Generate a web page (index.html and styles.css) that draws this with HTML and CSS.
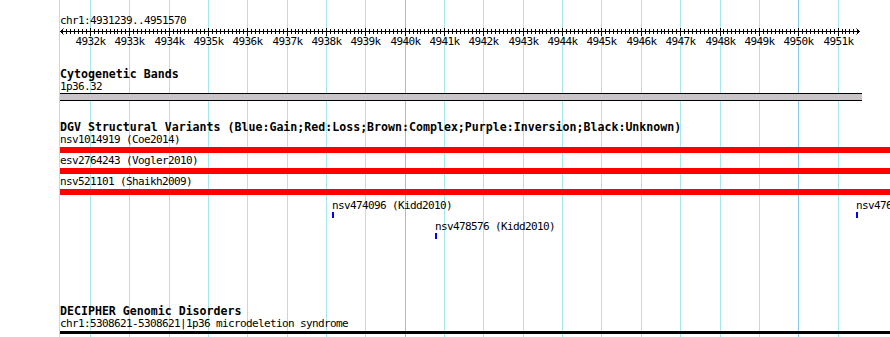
FILE: index.html
```html
<!DOCTYPE html>
<html lang="en">
<head>
  <meta charset="UTF-8" />
  <title>chr1:4931239..4951570</title>
  <link rel="stylesheet" href="styles.css">
</head>
<body>
  <div class="panel">
    <svg class="grid" id="grid" width="890" height="337"></svg>

    <div class="tracks">
      <div class="pos">chr1:4931239..4951570</div>
      <svg class="ruler" id="ruler" width="830" height="41"></svg>

      <div class="track-title">Cytogenetic Bands</div>
      <div class="label">1p36.32</div>
      <div class="band"></div>

      <div class="track-title dgv-title">DGV Structural Variants (Blue:Gain;Red:Loss;Brown:Complex;Purple:Inversion;Black:Unknown)</div>
      <div class="variant">
        <div class="label">nsv1014919 (Coe2014)</div>
        <div class="bar loss"></div>
      </div>
      <div class="variant">
        <div class="label">esv2764243 (Vogler2010)</div>
        <div class="bar loss"></div>
      </div>
      <div class="variant">
        <div class="label">nsv521101 (Shaikh2009)</div>
        <div class="bar loss"></div>
      </div>

      <div class="small-features">
        <div class="feature" style="left: 272px; top: 0px;">
          <div class="label">nsv474096 (Kidd2010)</div>
          <div class="mark gain"></div>
        </div>
        <div class="feature" style="left: 375px; top: 21px;">
          <div class="label">nsv478576 (Kidd2010)</div>
          <div class="mark gain"></div>
        </div>
        <div class="feature" style="left: 796px; top: 0px;">
          <div class="label">nsv476121 (Kidd2010)</div>
          <div class="mark gain"></div>
        </div>
      </div>

      <div class="track-title">DECIPHER Genomic Disorders</div>
      <div class="label">chr1:5308621-5308621|1p36 microdeletion syndrome</div>
      <div class="bar decipher"></div>
    </div>
  </div>

  <script src="script.js"></script>
</body>
</html>
```

FILE: styles.css
```css
html, body {
  margin: 0;
  padding: 0;
  background-color: #fff;
  overflow: hidden;
}
body {
  font-family: "DejaVu Sans Mono", "Liberation Mono", monospace;
  font-size: 11px;
  letter-spacing: -0.62px;
  color: #000;
}
.panel {
  position: relative;
  width: 890px;
  height: 337px;
  overflow: hidden;
}
.grid {
  position: absolute;
  top: 0;
  left: 0;
}
.tracks {
  position: relative;
  padding-left: 60px;
}
.pos {
  padding-top: 15px;
  height: 12px;
  line-height: 12px;
}
.ruler {
  display: block;
}
.ruler text {
  font-family: "DejaVu Sans Mono", "Liberation Mono", monospace;
  font-size: 11px;
  letter-spacing: -0.62px;
}
.label {
  height: 12px;
  line-height: 12px;
  white-space: nowrap;
}
.track-title {
  font-weight: bold;
  font-size: 11.6px;
  letter-spacing: 0;
  height: 13px;
  line-height: 13px;
  white-space: nowrap;
}
.dgv-title {
  margin-top: 20px;
}
.band {
  width: 802px;
  height: 6px;
  background-color: #c8c4c8;
  border-top: 1px solid #000;
  border-bottom: 1px solid #000;
}
.variant {
  padding-bottom: 2px;
}
.bar {
  margin-top: 1px;
  width: 830px;
}
.bar.loss {
  height: 6px;
  background-color: #ff0000;
}
.bar.decipher {
  height: 3px;
  background-color: #000;
}
.small-features {
  position: relative;
  margin-top: 3px;
  height: 105px;
}
.feature {
  position: absolute;
}
.mark {
  width: 2px;
  height: 6px;
}
.mark.gain {
  background-color: #0000ff;
}
```

FILE: script.js
```js
const start = 4931239;
const end = 4951570;
const scale = 800 / (end - start);
const ns = 'http://www.w3.org/2000/svg';

function xOf(pos) {
  return (pos - start) * scale;
}

function line(svg, x1, y1, x2, y2, color) {
  const l = document.createElementNS(ns, 'line');
  l.setAttribute('x1', x1);
  l.setAttribute('y1', y1);
  l.setAttribute('x2', x2);
  l.setAttribute('y2', y2);
  l.setAttribute('stroke', color);
  l.setAttribute('stroke-width', 1);
  svg.appendChild(l);
}

function drawGrid() {
  const grid = document.getElementById('grid');
  line(grid, 59.5, 0, 59.5, 337, '#a8e6ee');
  for (let k = 4932; k <= 4951; k++) {
    const x = Math.round(60 + xOf(k * 1000)) + 0.5;
    const color = k % 10 === 0 ? '#8cc6e6' : '#a8e6ee';
    line(grid, x, 0, x, 337, color);
  }
}

function drawRuler() {
  const ruler = document.getElementById('ruler');
  line(ruler, 0, 4.5, 800, 4.5, '#000');
  // arrow heads
  line(ruler, 0.5, 4.5, 3.5, 1.5, '#000');
  line(ruler, 0.5, 4.5, 3.5, 7.5, '#000');
  line(ruler, 799.5, 4.5, 796.5, 1.5, '#000');
  line(ruler, 799.5, 4.5, 796.5, 7.5, '#000');

  for (let p = 4931300; p < end; p += 100) {
    const x = Math.round(xOf(p)) + 0.5;
    if (p % 1000 === 0) {
      line(ruler, x, 1, x, 9, '#000');
      const t = document.createElementNS(ns, 'text');
      t.setAttribute('x', x);
      t.setAttribute('y', 18);
      t.setAttribute('text-anchor', 'middle');
      t.textContent = (p / 1000) + 'k';
      ruler.appendChild(t);
    } else {
      line(ruler, x, 2, x, 7, '#000');
    }
  }
}

drawGrid();
drawRuler();
```
